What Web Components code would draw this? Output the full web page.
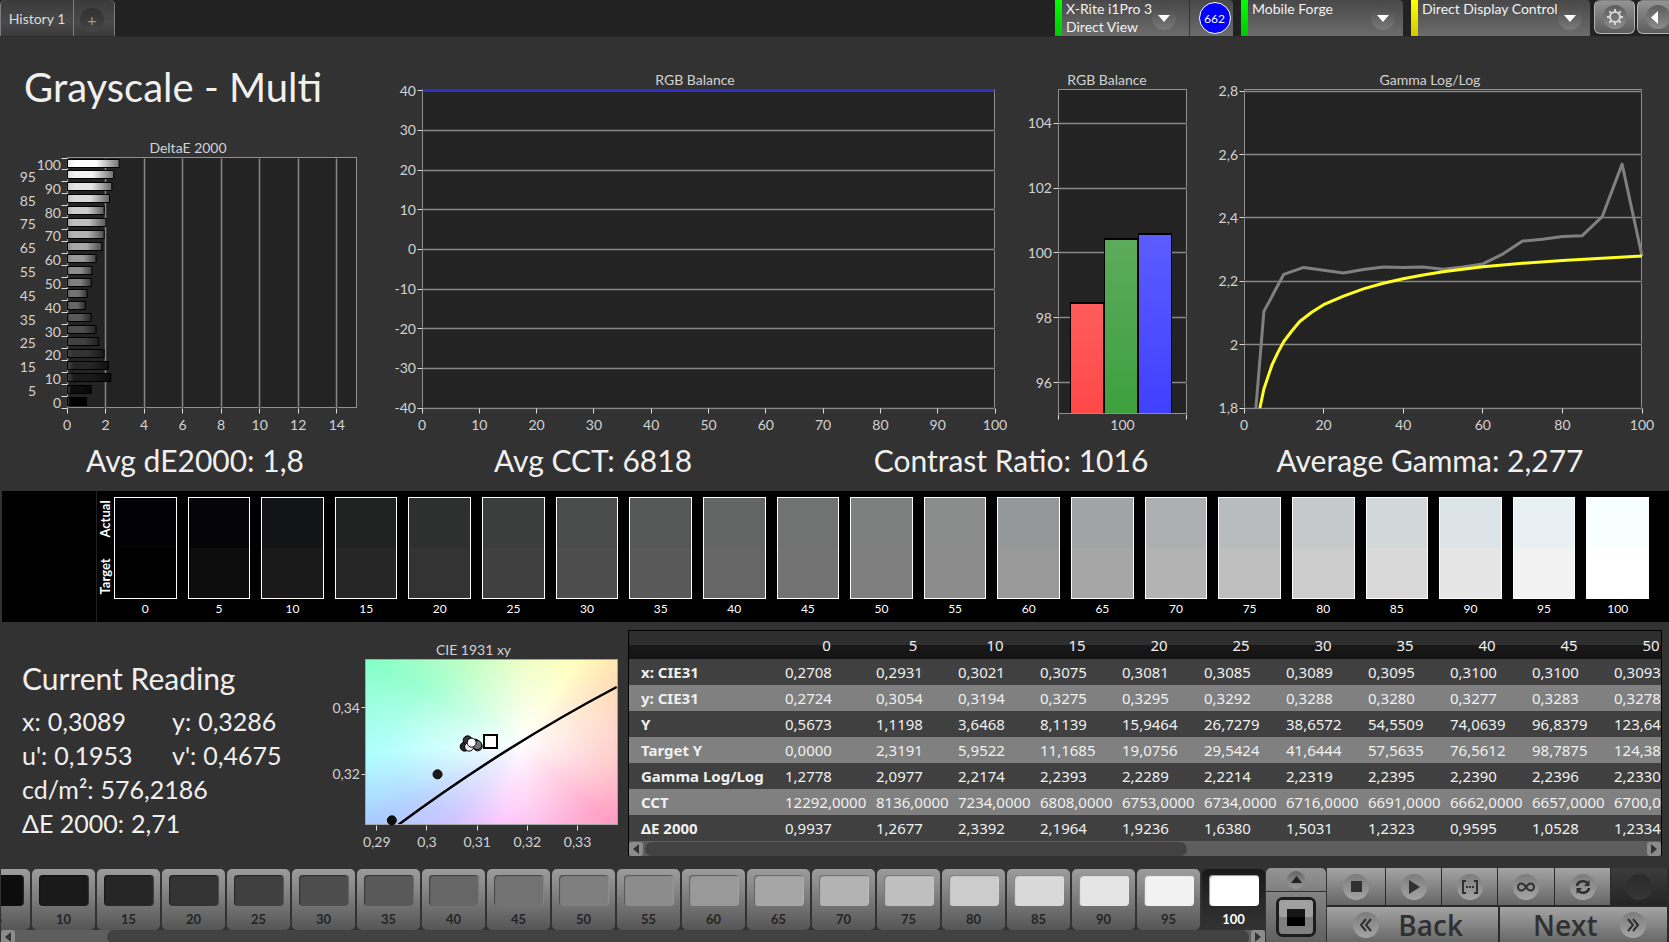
<!DOCTYPE html>
<html lang="en">
<head>
<meta charset="utf-8">
<title>Grayscale - Multi</title>
<style>
  html, body { margin: 0; height: 100%; }
  body { background: #323232; color: #f0f0f0; font-family: Lato, "Liberation Sans", sans-serif; font-size: 14px; overflow: hidden; }
</style>
</head>
<body>
<calibration-app></calibration-app>

<script>
const LEVELS = Array.from({ length: 21 }, (_, i) => i * 5);
const grey = level => { const v = Math.round(level * 2.55); return `rgb(${v},${v},${v})`; };

function define(name, html, Base = HTMLElement) {
  const template = document.createElement('template');
  template.innerHTML = html;
  customElements.define(name, class extends Base {
    constructor() {
      super();
      this.attachShadow({ mode: 'open' }).append(template.content.cloneNode(true));
      if (this.ready) this.ready();
    }
  });
}

/* ---------- charts ---------- */

class Chart extends HTMLElement {
  connectedCallback() {
    this.svg = this.shadowRoot.querySelector('svg');
    new ResizeObserver(() => this.render()).observe(this);
    this.render();
  }
  num(name, fallback = 0) { return this.hasAttribute(name) ? Number(this.getAttribute(name)) : fallback; }
  render() {
    const w = this.clientWidth, h = this.clientHeight;
    if (w < 80 || h < 80) return;
    this.L = this.num('left'); this.R = w - this.num('right');
    this.T = 20; this.B = h - this.num('bottom', 34);
    this.svg.setAttribute('viewBox', `0 0 ${w} ${h}`);
    const title = `<text x="${(this.L - this.num('labels') + this.R) / 2}" y="15" text-anchor="middle">${this.getAttribute('title-text')}</text>`;
    this.svg.innerHTML = title + this.plot();
  }
  x(v) { const [a, b] = this.xr; return this.L + (v - a) / (b - a) * (this.R - this.L); }
  y(v) { const [a, b] = this.yr; return this.B - (v - a) / (b - a) * (this.B - this.T); }
  fmt(v) { return String(Math.round(v * 100) / 100).replace('.', ','); }
  frame(fill = '#232323') {
    return `<rect class="frame" fill="${fill}" x="${this.L + .5}" y="${this.T - .5}" width="${this.R - this.L - 1}" height="${this.B - this.T}"/>`;
  }
  line(x1, y1, x2, y2, cls) {
    const d = `M${Math.floor(x1) + .5} ${Math.floor(y1) + .5}L${Math.floor(x2) + .5} ${Math.floor(y2) + .5}`;
    return (cls === 'grid' ? `<path class="halo" d="${d}"/>` : '') + `<path class="${cls}" d="${d}"/>`;
  }
  xAxis(values, grid) {
    return values.map(v => (grid ? this.line(this.x(v), this.T, this.x(v), this.B - 1, 'grid') : '')
      + this.line(this.x(v), this.B, this.x(v), this.B + 5, 'tick')
      + `<text x="${this.x(v)}" y="${this.B + 22}" text-anchor="middle">${this.fmt(v)}</text>`).join('');
  }
  yAxis(values, grid) {
    return values.map(v => (grid ? this.line(this.L, this.y(v), this.R - 1, this.y(v), 'grid') : '')
      + this.line(this.L - 5, this.y(v), this.L, this.y(v), 'tick')
      + `<text x="${this.L - 6}" y="${this.y(v) + 5}" text-anchor="end">${this.fmt(v)}</text>`).join('');
  }
}

const chartStyle = `<style>
  :host { display: block; position: relative; min-width: 0; min-height: 0; overflow: hidden; }
  svg { display: block; width: 100%; height: 100%; }
  text { fill: #d2d2d2; font: 14px Lato, "Liberation Sans", sans-serif; }
  .frame { stroke: #909090; }
  .grid { stroke: #868686; }
  .halo { stroke: #3c3c3c; stroke-width: 3; }
  .tick { stroke: #dcdcdc; }
</style>`;

define('delta-chart', chartStyle + '<svg role="img"></svg>', class extends Chart {
  plot() {
    this.xr = [0, 15.05]; this.yr = [0, 21];
    const values = [.99, 1.23, 2.25, 2.12, 1.9, 1.62, 1.48, 1.23, .92, 1.02, 1.23, 1.27, 1.48, 1.78, 1.9, 2, 1.9, 2.18, 2.3, 2.4, 2.68];
    let out = this.frame() + this.xAxis([0, 2, 4, 6, 8, 10, 12, 14], true);
    for (let i = 0; i <= 21; i++) out += this.line(this.L - 6, this.y(i), this.L, this.y(i), 'tick');
    values.forEach((v, i) => {
      const g = Math.round(LEVELS[i] * 2.55), edge = Math.round(g * .45);
      const lead = Math.max(g - 25, 70);
      const top = Math.floor(this.y(i + 1)) + 1;
      out += `<linearGradient id="g${i}"><stop offset="0" stop-color="rgb(${lead},${lead},${lead})"/><stop offset=".15" stop-color="rgb(${g},${g},${g})"/><stop offset=".55" stop-color="rgb(${g},${g},${g})"/><stop offset="1" stop-color="rgb(${edge},${edge},${edge})"/></linearGradient>`
        + `<rect x="${this.L + .5}" y="${top + .5}" width="${this.x(v) - this.L}" height="8" fill="url(#g${i})" stroke="#000"/>`
        + `<text x="${i % 2 ? this.L - 31 : this.L - 6}" y="${this.y(i)}" text-anchor="end">${LEVELS[i]}</text>`;
    });
    return out;
  }
});

define('balance-chart', chartStyle + '<svg role="img"></svg>', class extends Chart {
  plot() {
    this.xr = [0, 100]; this.yr = [-40, 40.2];
    return this.frame() + this.yAxis([-40, -30, -20, -10, 0, 10, 20, 30, 40], true)
      + this.xAxis([0, 10, 20, 30, 40, 50, 60, 70, 80, 90, 100])
      + `<path stroke="#3030d0" stroke-width="2" d="M${this.L + 1} ${this.T + 1}H${this.R - 1}"/>`;
  }
});

define('balance-bars', chartStyle + '<svg role="img"></svg>', class extends Chart {
  plot() {
    this.xr = [0, 1]; this.yr = [95.03, 105.03];
    const w = this.R - this.L;
    const bars = [[98.45, '#ff5c5c', '#ff4848'], [100.42, '#5cab5c', '#3ea03e'], [100.6, '#5c5cff', '#4040ff']];
    let out = this.frame() + this.yAxis([96, 98, 100, 102, 104], true)
      + this.line(this.L, this.B, this.L, this.B + 5, 'tick') + this.line(this.R - 1, this.B, this.R - 1, this.B + 5, 'tick')
      + `<text x="${this.L + w / 2}" y="${this.B + 16}" text-anchor="middle">100</text>`;
    bars.forEach(([v, a, b], i) => {
      const bw = Math.round(w * .266), left = Math.round(this.L + w * .095) + i * bw, top = Math.round(this.y(v));
      out += `<linearGradient id="b${i}" x2="0" y2="1"><stop stop-color="${a}"/><stop offset="1" stop-color="${b}"/></linearGradient>`
        + `<rect x="${left}" y="${top - 1}" width="${bw}" height="${this.B - top}"/>`
        + `<rect x="${left + 1}" y="${top + 1}" width="${bw - 2}" height="${this.B - top - 2}" fill="url(#b${i})"/>`;
    });
    return out;
  }
});

define('gamma-chart', chartStyle + `<style>.curve { fill: none; stroke-width: 3; stroke-linejoin: round; }</style><svg role="img"></svg>`, class extends Chart {
  plot() {
    this.xr = [0, 100]; this.yr = [1.8, 2.804];
    const measured = [[3, 1.8], [5, 2.105], [10, 2.222], [15, 2.244], [20, 2.235], [25, 2.226], [30, 2.237], [35, 2.245], [40, 2.244], [45, 2.245], [50, 2.238], [55, 2.245], [60, 2.255], [65, 2.286], [70, 2.327], [75, 2.333], [80, 2.341], [85, 2.344], [90, 2.404], [95, 2.57], [100, 2.28]];
    const target = [[4, 1.8], [5, 1.86], [7, 1.935], [8.5, 1.975], [10, 2.01], [12, 2.043], [14, 2.073], [17, 2.102], [20, 2.126], [25, 2.153], [30, 2.176], [35, 2.194], [40, 2.208], [45, 2.22], [50, 2.23], [60, 2.246], [70, 2.257], [80, 2.266], [90, 2.273], [100, 2.28]];
    const path = pts => 'M' + pts.map(([a, b]) => `${this.x(a).toFixed(1)} ${this.y(b).toFixed(1)}`).join('L');
    return this.frame() + this.yAxis([1.8, 2, 2.2, 2.4, 2.6, 2.8], true) + this.xAxis([0, 20, 40, 60, 80, 100])
      + `<path class="curve" stroke="#808080" d="${path(measured)}"/><path class="curve" stroke="#ffff20" d="${path(target)}"/>`;
  }
});

define('cie-chart', chartStyle + `<style>
  .gamut { position: absolute; inset: 20px 11px 34px 36px;
    background: radial-gradient(ellipse 85% 80% at 62% 50%, #fff 0, #ffffffa0 28%, #ffffff38 62%, #fff0 100%),
      conic-gradient(at 62% 50%, #e8ffb8, #ffffb0 34deg, #ffd4a0 58deg, #ffb0a4 90deg, #ff8cba 132deg, #ffb4ec 172deg, #fcb8ff 195deg, #c4b8ff 222deg, #a4c8ff 242deg, #a0ffff 266deg, #80ffc4 298deg, #b0ffb8 325deg, #e8ffb8); }
  svg { position: relative; }
</style><div class="gamut"></div><svg role="img"></svg>`, class extends Chart {
  plot() {
    this.xr = [.28785, .33785]; this.yr = [.3048, .3543];
    const dot = (a, b, c, s = '#000') => `<circle cx="${this.x(a)}" cy="${this.y(b)}" r="4.5" fill="${c}" stroke="${s}"/>`;
    const P = (a, b) => `${this.x(a).toFixed(1)} ${this.y(b).toFixed(1)}`;
    return this.xAxis([.29, .3, .31, .32, .33]) + this.yAxis([.32, .34])
      + `<path fill="none" stroke="#000" stroke-width="2.5" d="M${P(.2943, .3049)}Q${P(.3155, .3285)} ${P(.3378, .3462)}"/>`
      + `<rect fill="none" stroke="#a4a4a4" x="${this.L - .5}" y="${this.T - .5}" width="${this.R - this.L + 1}" height="${this.B - this.T}"/>`
      + dot(.2930, .3062, '#0d0d0d') + dot(.3021, .32, '#1a1a1a') + dot(.3075, .3283, '#262626') + dot(.3081, .3302, '#333')
      + dot(.3096, .3292, '#555') + dot(.3101, .3284, '#666') + dot(.31, .3288, '#777') + dot(.3084, .3283, '#eee') + dot(.3089, .3295, '#fff')
      + `<rect fill="#fff" stroke="#000" stroke-width="2" x="${Math.round(this.x(.3127)) - 7}" y="${Math.round(this.y(.3298)) - 7}" width="13" height="13"/>`;
  }
});

/* ---------- top bar ---------- */

define('round-glyph', `<style>
  :host { display: inline-grid; place-items: center; width: 24px; height: 24px; border-radius: 50%; background: linear-gradient(#4c4c4c, #7a7a7a); }
  ::slotted(svg) { display: block; }
</style><slot></slot>`);

define('history-tabs', `<style>
  :host { display: flex; align-self: stretch; color: #dcdcdc; }
  button { all: unset; box-sizing: border-box; display: grid; place-items: center; height: 36px; cursor: pointer;
    background: linear-gradient(#3a3a3a, #494949 60%, #3a3a3a); border: 1px solid #7c7c7c; border-width: 0 1px; font-size: 14px; }
  .tab { width: 74px; border-radius: 5px 0 0 0; padding-top: 1px; }
  .add { width: 41px; border-left: 0; border-radius: 0 5px 0 0; }
  .disc { display: grid; place-items: center; width: 24px; height: 24px; margin: 4px 4px 0 0; border-radius: 50%; background: linear-gradient(#303030, #454545); color: #999; font-size: 16px; line-height: 24px; }
</style>
<button class="tab" type="button">History 1</button>
<button class="add" type="button" aria-label="Add tab"><span class="disc">+</span></button>`);

define('device-tab', `<style>
  :host { display: flex; height: 36px; color: #f2f2f2; background: linear-gradient(#484848, #6c6c6c); border-radius: 4px 4px 0 0; box-sizing: border-box; }
  button { all: unset; box-sizing: border-box; flex: 1; display: flex; justify-content: space-between; align-items: flex-start; cursor: pointer; padding: 0 var(--inset, 8px) 0 4px;
    font-size: 14px; line-height: 18px; white-space: nowrap; }
  .status { width: 7px; background: linear-gradient(var(--from, #00ff00), var(--to, #00c800)); }
  round-glyph { margin-top: 6px; }
</style>
<div class="status"></div>
<button type="button" aria-haspopup="menu"><span class="text"><slot></slot></span>
  <round-glyph><svg width="12" height="7" viewBox="0 0 12 7"><path fill="#fff" d="M0 0h12L6 7z"/></svg></round-glyph></button>
<slot name="badge"></slot>`);

define('reading-badge', `<style>
  :host { display: grid; place-items: center; width: 44px; padding-left: 6px; box-sizing: border-box; border-left: 1px solid #333; }
  span { display: grid; place-items: center; width: 32px; height: 32px; border: 1px solid #fff; border-radius: 50%; background: #0000fc; color: #fff; font-size: 12px; box-sizing: border-box; }
</style><span><slot></slot></span>`);

define('tool-button', `<style>
  :host { display: block; width: 41px; }
  button { all: unset; box-sizing: border-box; display: grid; place-items: center; width: 100%; height: 34px; cursor: pointer;
    border: 1px solid #b4b4b4; border-top-color: #808080; border-radius: 6px; background: linear-gradient(#949494, #5c5c5c); }
  round-glyph { background: linear-gradient(#5c5c5c, #8c8c8c); }
</style><button type="button"><round-glyph><slot></slot></round-glyph></button>`,
class extends HTMLElement {
  connectedCallback() { this.shadowRoot.querySelector('button').setAttribute('aria-label', this.getAttribute('label') || ''); }
});

define('top-bar', `<style>
  :host { display: flex; height: 36px; background: #222; border-bottom: 1px solid #2c2c2c; overflow: hidden; }
  .spacer { flex: 1; }
  .meter { width: 178px; margin-right: 8px; --inset: 13px; }
  .source { width: 162px; margin-right: 8px; }
  .display { width: 179px; margin-right: 4px; --from: #ffff00; --to: #d2c800; }
  tool-button { flex: none; margin-right: 2px; }
  tool-button.last { margin-right: -9px; }
</style>
<history-tabs></history-tabs>
<div class="spacer"></div>
<device-tab class="meter">X-Rite i1Pro 3<br>Direct View<reading-badge slot="badge">662</reading-badge></device-tab>
<device-tab class="source">Mobile Forge</device-tab>
<device-tab class="display">Direct Display Control</device-tab>
<tool-button label="Settings"><svg width="18" height="18" viewBox="-9 -9 18 18"><circle r="5" fill="none" stroke="#d8d8d8" stroke-width="2"/><path stroke="#d8d8d8" stroke-width="2" d="M0-5.500V-8M0 5.500V8M-5.500 0H-8M5.500 0H8M3.900-3.900L5.700-5.700M-3.900-3.900L-5.700-5.700M3.900 3.900L5.700 5.700M-3.900 3.900L-5.700 5.700"/></svg></tool-button>
<tool-button class="last" label="Collapse"><svg width="14" height="13" viewBox="0 0 14 13"><path fill="#fff" d="M7 0v13L0 6.500z"/></svg></tool-button>`);

/* ---------- patch band ---------- */

define('patch-band', `<style>
  :host { display: grid; grid-template-columns: 94px 18px 1fr; padding-right: 20px; margin-left: 2px; background: #000; height: 131px; box-sizing: border-box; color: #fff; }
  .side { grid-column: 2; border-left: 1px solid #222; display: grid; grid-template-rows: 1fr 1fr; padding: 0 1px 18px 0; }
  .side span { writing-mode: vertical-rl; transform: rotate(180deg); text-align: center; font-size: 13px; font-weight: 700; line-height: 16px; }
  ol { display: grid; grid-template-columns: repeat(21, 1fr); column-gap: 11px; margin: 0; padding: 6px 0 0; list-style: none; }
  .patch { height: 100px; border: 1px solid #fff; display: block; }
  li { text-align: center; font-size: 12px; line-height: 19px; min-width: 0; }
</style>
<div class="side"><span>Actual</span><span>Target</span></div><ol></ol>`, class extends HTMLElement {
  ready() {
    const actual = ['#020205', '#050507', '#121416', '#202121', '#2d302f', '#3c3e3d', '#4a4c4b', '#565857', '#646665', '#717372', '#7e8080', '#8b8d8d', '#959898', '#a1a4a4', '#adb0b1', '#b8bcbc', '#c5c9ca', '#d2d8d8', '#dde4e8', '#e9f0f4', '#f8ffff'];
    this.shadowRoot.querySelector('ol').innerHTML = LEVELS.map((l, i) =>
      `<li><span class="patch" style="background:linear-gradient(${actual[i]} 50%, ${grey(l)} 50%)"></span>${l}</li>`).join('');
  }
});

/* ---------- readings ---------- */

define('current-reading', `<style>
  :host { display: block; padding: 35px 0 0 22px; white-space: nowrap; }
  h2 { margin: 0; font-size: 30px; font-weight: 400; line-height: 42px; }
  dl { margin: 5px 0 0; display: grid; grid-template-columns: 150px auto; justify-content: start; font-size: 25px; line-height: 34px; }
  dl > div { display: flex; gap: 7px; }
  .wide { grid-column: span 2; }
  dt, dd { margin: 0; }
</style>
<h2>Current Reading</h2>
<dl><div><dt>x:</dt><dd>0,3089</dd></div><div><dt>y:</dt><dd>0,3286</dd></div>
<div><dt>u':</dt><dd>0,1953</dd></div><div><dt>v':</dt><dd>0,4675</dd></div>
<div class="wide"><dt>cd/m²:</dt><dd>576,2186</dd></div>
<div class="wide"><dt>ΔE 2000:</dt><dd>2,71</dd></div></dl>`);

define('scroll-track', `<style>
  :host { display: flex; align-items: center; height: 16px; background: #5e5e5e; box-sizing: border-box; }
  button { all: unset; display: grid; place-items: center; width: 14px; height: 14px; border-radius: 3px; background: #8c8c8c; flex: none; cursor: pointer; }
  .rail { flex: 1; height: 14px; display: flex; }
  .thumb { margin-left: var(--start, 2px); width: var(--size, 50%); border-radius: 7px; background: #424242; }
</style>
<button type="button" aria-label="Scroll left"><svg width="6" height="10" viewBox="0 0 6 10"><path fill="#333" d="M6 0v10L0 5z"/></svg></button>
<div class="rail"><div class="thumb"></div></div>
<button type="button" aria-label="Scroll right"><svg width="6" height="10" viewBox="0 0 6 10"><path fill="#333" d="M0 0v10l6-5z"/></svg></button>`);

define('data-table', `<style>
  :host { display: block; min-width: 0; height: 226px; overflow: hidden; border: 1px solid #000; border-width: 1px 1px 0; box-sizing: border-box; font-family: "Noto Sans", "Open Sans", sans-serif; font-size: 15px; background: #404040; }
  .view { overflow: hidden; }
  table { table-layout: fixed; width: 1063px; border-collapse: collapse; }
  th, td { padding: 0; height: 26px; line-height: 26px; text-align: left; white-space: nowrap; font-weight: 400; }
  thead th { height: 28px; text-align: center; background: linear-gradient(#2e2e2e 50%, #181818 50%, #141414); }
  tbody th { padding-left: 12px; font-weight: 700; }
  td { padding-left: 4px; }
  tbody tr:nth-child(even) { background: #808080; }
  .name { width: 152px; } .first { width: 91px; } .col { width: 82px; }
  scroll-track { --size: 54%; }
</style>
<div class="view"><table><colgroup><col class="name"><col class="first"></colgroup><thead><tr><th scope="col"></th></tr></thead><tbody></tbody></table></div>
<scroll-track></scroll-track>`, class extends HTMLElement {
  ready() {
    const rows = {
      'x: CIE31': '0,2708 0,2931 0,3021 0,3075 0,3081 0,3085 0,3089 0,3095 0,3100 0,3100 0,3093',
      'y: CIE31': '0,2724 0,3054 0,3194 0,3275 0,3295 0,3292 0,3288 0,3280 0,3277 0,3283 0,3278',
      'Y': '0,5673 1,1198 3,6468 8,1139 15,9464 26,7279 38,6572 54,5509 74,0639 96,8379 123,64',
      'Target Y': '0,0000 2,3191 5,9522 11,1685 19,0756 29,5424 41,6444 57,5635 76,5612 98,7875 124,38',
      'Gamma Log/Log': '1,2778 2,0977 2,2174 2,2393 2,2289 2,2214 2,2319 2,2395 2,2390 2,2396 2,2330',
      'CCT': '12292,0000 8136,0000 7234,0000 6808,0000 6753,0000 6734,0000 6716,0000 6691,0000 6662,0000 6657,0000 6700,0',
      'ΔE 2000': '0,9937 1,2677 2,3392 2,1964 1,9236 1,6380 1,5031 1,2323 0,9595 1,0528 1,2334'
    };
    const $ = s => this.shadowRoot.querySelector(s);
    $('colgroup').insertAdjacentHTML('beforeend', '<col class="col">'.repeat(10));
    $('thead tr').insertAdjacentHTML('beforeend', LEVELS.slice(0, 11).map(l => `<th scope="col">${l}</th>`).join(''));
    $('tbody').innerHTML = Object.entries(rows).map(([name, values]) =>
      `<tr><th scope="row">${name}</th>${values.split(' ').map(v => `<td>${v}</td>`).join('')}</tr>`).join('');
  }
});

/* ---------- bottom bar ---------- */

define('patch-button', `<style>
  :host { display: block; flex: none; width: 63px; height: 61px; }
  button { all: unset; box-sizing: border-box; display: flex; flex-direction: column; align-items: center; width: 100%; height: 100%; padding-top: 6px; cursor: pointer;
    border-radius: 5px; background: linear-gradient(#9c9c9c, #828282 40%, #555); color: #242424; font-weight: 700; font-size: 13px; }
  i { width: 50px; height: 31px; border-radius: 4px; background: var(--patch); box-shadow: inset 1px 1px 1px #0006, inset -1px 0 1px #fff2; margin-bottom: 5px; }
  span { line-height: 17px; }
  :host([selected]) button { background: linear-gradient(#1a1a1a, #333); color: #fff; }
</style><button type="button"><i></i><span><slot></slot></span></button>`);

define('patch-strip', `<style>
  :host { display: flex; flex-direction: column; min-width: 0; padding-left: 1px; }
  .list { display: flex; justify-content: flex-end; gap: 2px; padding: 1px 0 1px 0; overflow: hidden; }
  scroll-track { height: 14px; margin-top: -1px; --start: 92px; --size: calc(100% - 94px); }
</style><div class="list"></div><scroll-track></scroll-track>`, class extends HTMLElement {
  ready() {
    this.shadowRoot.querySelector('.list').innerHTML = LEVELS.slice(1).map(l =>
      `<patch-button style="--patch:${grey(l)}"${l === 100 ? ' selected' : ''}>${l}</patch-button>`).join('');
  }
});

define('pattern-picker', `<style>
  :host { display: grid; grid-template-rows: 23px 50px; row-gap: 1px; width: 60px; }
  button { all: unset; display: grid; place-items: center; background: linear-gradient(#949494, #808080); cursor: pointer; }
  .up { border-radius: 5px 5px 0 0; }
  .current { background: linear-gradient(#848484, #606060); }
  round-glyph { width: 18px; height: 18px; background: linear-gradient(#666, #999); }
</style>
<button class="up" type="button" aria-label="Expand"><round-glyph><svg width="11" height="7" viewBox="0 0 11 7"><path fill="#222" d="M0 7h11L5.500 0z"/></svg></round-glyph></button>
<button class="current" type="button" aria-label="Pattern window"><svg width="40" height="40" viewBox="0 0 40 40"><rect x="1.500" y="1.500" width="37" height="37" rx="5" fill="#808080" stroke="#1c1c1c" stroke-width="3"/><rect x="3" y="3" width="34" height="17" rx="3" fill="#a0a0a0"/><rect x="11" y="12" width="18" height="17" fill="#000"/><rect x="11" y="12" width="18" height="8" fill="#161616"/></svg></button>`);

define('transport-panel', `<style>
  :host { display: grid; grid-template-rows: 37px 35px; row-gap: 2px; padding-right: 2px; background: #2a2a2a; }
  .row { display: grid; column-gap: 1px; }
  .tools { grid-template-columns: 58px 55px 55px 56px 55px 1fr; }
  .steps { grid-template-columns: 171px 1fr; column-gap: 2px; }
  button { all: unset; display: flex; align-items: center; justify-content: center; cursor: pointer; background: linear-gradient(#a4a4a4, #666); color: #303030; }
  .tools button:last-child { background: linear-gradient(#3c3c3c, #242424); }
  .tools button:last-child round-glyph { background: linear-gradient(#2a2a2a, #363636); }
  round-glyph { width: 26px; height: 26px; background: linear-gradient(#7c7c7c, #a4a4a4); }
  .steps { font: 600 28px "Open Sans", "Noto Sans", sans-serif; line-height: 35px; }
  .steps button { justify-content: space-between; }
  .steps span { padding-top: 1px; }
  .steps .back { padding: 0 35px 0 26px; }
  .steps .next { padding: 0 21px 0 33px; }
</style>
<div class="row tools">
  <button type="button" aria-label="Stop"><round-glyph><svg width="11" height="11"><path fill="#303030" d="M0 0h11v11H0z"/></svg></round-glyph></button>
  <button type="button" aria-label="Play"><round-glyph><svg width="12" height="14" viewBox="0 0 12 14"><path fill="#303030" d="M1 0l11 7L1 14z"/></svg></round-glyph></button>
  <button type="button" aria-label="Read series"><round-glyph><svg width="16" height="14" viewBox="0 0 16 14"><path fill="none" stroke="#303030" stroke-width="2" d="M4 1H1v12h3M12 1h3v12h-3"/><path stroke="#303030" stroke-width="2" stroke-dasharray="2 1" d="M4 7h8"/></svg></round-glyph></button>
  <button type="button" aria-label="Read continuously"><round-glyph><svg width="18" height="10" viewBox="0 0 18 10"><path fill="none" stroke="#303030" stroke-width="2" d="M9 5C7 2 6 1.500 4.500 1.500a3.500 3.500 0 0 0 0 7C6 8.500 7 8 9 5s3-3.500 4.500-3.500a3.500 3.500 0 0 1 0 7C12 8.500 11 8 9 5z"/></svg></round-glyph></button>
  <button type="button" aria-label="Refresh"><round-glyph><svg width="16" height="16" viewBox="0 0 16 16"><path fill="none" stroke="#303030" stroke-width="2.500" d="M2 7a6 5 0 0 1 10.500-3M14 9a6 5 0 0 1-10.500 3"/><path fill="#303030" d="M14.500 1v6H9zM1.500 15V9H7z"/></svg></round-glyph></button>
  <button type="button" aria-label="Idle"><round-glyph></round-glyph></button>
</div>
<div class="row steps">
  <button class="back" type="button"><round-glyph><svg width="14" height="14" viewBox="0 0 14 14"><path fill="none" stroke="#303030" stroke-width="2" d="M7 1L2 7l5 6M12 1L7 7l5 6"/></svg></round-glyph><span>Back</span></button>
  <button class="next" type="button"><span>Next</span><round-glyph><svg width="14" height="14" viewBox="0 0 14 14"><path fill="none" stroke="#303030" stroke-width="2" d="M2 1l5 6-5 6M7 1l5 6-5 6"/></svg></round-glyph></button>
</div>`);

/* ---------- page ---------- */

define('calibration-app', `<style>
  :host { display: grid; grid-template-rows: auto minmax(0, 1fr) auto auto auto auto; grid-template-columns: minmax(0, 1fr); height: 100vh; }
  .charts { display: grid; grid-template-columns: 382fr 640fr 178fr 469fr; padding-top: 33px; min-height: 0; }
  .first { display: flex; flex-direction: column; min-width: 0; min-height: 0; }
  h1 { margin: 0; padding-left: 24px; height: 68px; font-size: 40px; font-weight: 400; line-height: 35px; white-space: nowrap; }
  .first delta-chart { flex: 1; }
  .stats { display: grid; grid-template-columns: 390fr 406fr 430fr 408fr; padding: 0 35px 11px 0; margin-top: -2px; font-size: 30px; line-height: 40px; text-align: center; white-space: nowrap; }
  .stats p { margin: 0; }
  .details { display: grid; grid-template-columns: 330fr 298fr 1034fr; padding-right: 7px; height: 246px; }
  cie-chart { height: 219px; margin-top: 18px; }
  data-table { margin-top: 8px; }
  footer { display: grid; grid-template-columns: minmax(0, 1fr) 60px 342px; column-gap: 1px; height: 74px; overflow: hidden; }
</style>
<top-bar></top-bar>
<main class="charts">
  <div class="first"><h1>Grayscale - Multi</h1><delta-chart title-text="DeltaE 2000" left="67" right="25" labels="48"></delta-chart></div>
  <balance-chart title-text="RGB Balance" left="40" right="27" labels="27"></balance-chart>
  <balance-bars title-text="RGB Balance" left="36" right="13" bottom="28" labels="31"></balance-bars>
  <gamma-chart title-text="Gamma Log/Log" left="44" right="27" labels="26"></gamma-chart>
</main>
<section class="stats"><p>Avg dE2000: 1,8</p><p>Avg CCT: 6818</p><p>Contrast Ratio: 1016</p><p>Average Gamma: 2,277</p></section>
<patch-band></patch-band>
<section class="details"><current-reading></current-reading><cie-chart title-text="CIE 1931 xy" left="36" right="11" labels="36"></cie-chart><data-table></data-table></section>
<footer><patch-strip></patch-strip><pattern-picker></pattern-picker><transport-panel></transport-panel></footer>`);
</script>
</body>
</html>
